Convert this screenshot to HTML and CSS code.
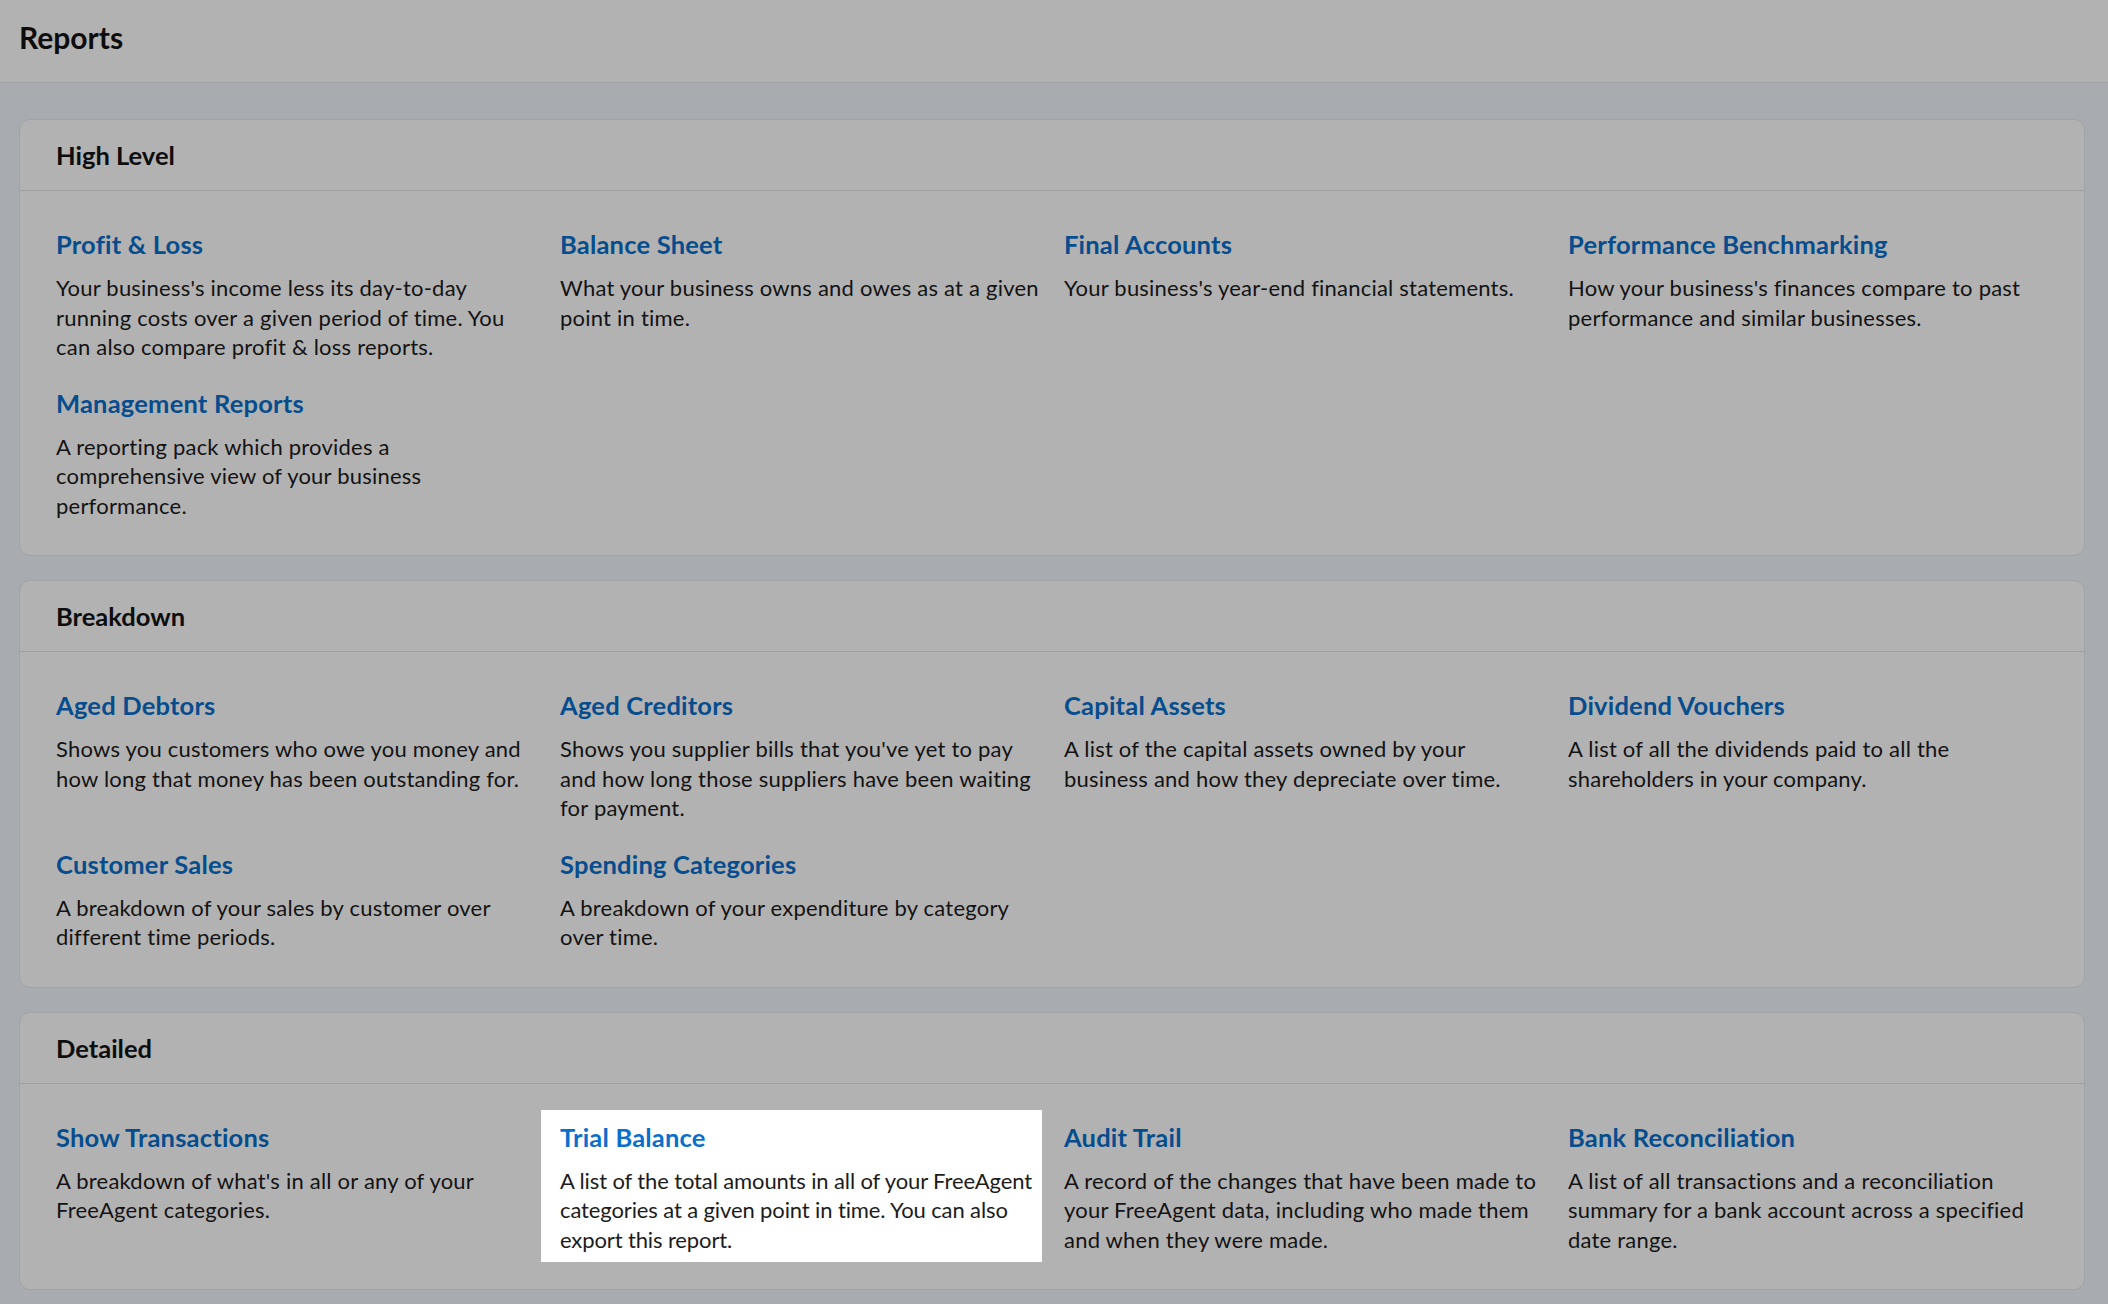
FILE: index.html
```html
<!DOCTYPE html>
<html lang="en">
<head>
<meta charset="utf-8">
<title>Reports</title>
<link rel="stylesheet" href="styles.css">
</head>
<body>
<header class="page-header">
  <h1 class="page-title">Reports</h1>
</header>
<main class="content">
  <section class="card">
    <h2 class="card-title">High Level</h2>
    <div class="grid">
      <div class="item"><a class="item-title" href="#">Profit &amp; Loss</a><p class="item-desc">Your business's income less its day-to-day running costs over a given period of time. You can also compare profit &amp; loss reports.</p></div>
      <div class="item"><a class="item-title" href="#">Balance Sheet</a><p class="item-desc">What your business owns and owes as at a given point in time.</p></div>
      <div class="item"><a class="item-title" href="#">Final Accounts</a><p class="item-desc">Your business's year-end financial statements.</p></div>
      <div class="item"><a class="item-title" href="#">Performance Benchmarking</a><p class="item-desc">How your business's finances compare to past performance and similar businesses.</p></div>
      <div class="item"><a class="item-title" href="#">Management Reports</a><p class="item-desc narrow">A reporting pack which provides a comprehensive view of your business performance.</p></div>
    </div>
  </section>
  <section class="card">
    <h2 class="card-title">Breakdown</h2>
    <div class="grid">
      <div class="item"><a class="item-title" href="#">Aged Debtors</a><p class="item-desc">Shows you customers who owe you money and how long that money has been outstanding for.</p></div>
      <div class="item"><a class="item-title" href="#">Aged Creditors</a><p class="item-desc">Shows you supplier bills that you've yet to pay and how long those suppliers have been waiting for payment.</p></div>
      <div class="item"><a class="item-title" href="#">Capital Assets</a><p class="item-desc">A list of the capital assets owned by your business and how they depreciate over time.</p></div>
      <div class="item"><a class="item-title" href="#">Dividend Vouchers</a><p class="item-desc">A list of all the dividends paid to all the shareholders in your company.</p></div>
      <div class="item"><a class="item-title" href="#">Customer Sales</a><p class="item-desc">A breakdown of your sales by customer over different time periods.</p></div>
      <div class="item"><a class="item-title" href="#">Spending Categories</a><p class="item-desc">A breakdown of your expenditure by category over time.</p></div>
    </div>
  </section>
  <section class="card">
    <h2 class="card-title">Detailed</h2>
    <div class="grid">
      <div class="item"><a class="item-title" href="#">Show Transactions</a><p class="item-desc">A breakdown of what's in all or any of your FreeAgent categories.</p></div>
      <div class="item spotlight"><a class="item-title" href="#">Trial Balance</a><p class="item-desc">A list of the total amounts in all of your FreeAgent categories at a given point in time. You can also export this report.</p></div>
      <div class="item"><a class="item-title" href="#">Audit Trail</a><p class="item-desc">A record of the changes that have been made to your FreeAgent data, including who made them and when they were made.</p></div>
      <div class="item"><a class="item-title" href="#">Bank Reconciliation</a><p class="item-desc">A list of all transactions and a reconciliation summary for a bank account across a specified date range.</p></div>
    </div>
  </section>
</main>
</body>
</html>
```

FILE: styles.css
```css
* { box-sizing: border-box; }
html, body { margin: 0; padding: 0; }
body {
  background: #f1f5fc;
  font-family: Lato, "Noto Sans", "Liberation Sans", sans-serif;
  color: #1f1f1f;
  overflow: hidden;
  height: 1304px;
}
.page-header {
  background: #ffffff;
  height: 83px;
  border-bottom: 1px solid #e4e7ec;
  display: flex;
  align-items: center;
  padding: 0 19px;
}
.page-title {
  margin: 0;
  font-size: 30px;
  font-weight: 700;
  color: #141414;
  padding-bottom: 8px;
}
.content {
  padding: 36px 23px 0 19px;
  display: flex;
  flex-direction: column;
  gap: 24px;
}
.card {
  background: #ffffff;
  border: 1px solid #e6e8eb;
  border-radius: 11px;
}
.card-title {
  margin: 0;
  height: 71px;
  display: flex;
  align-items: center;
  padding: 0 36px 0;
  font-size: 25.5px;
  font-weight: 700;
  color: #141414;
  border-bottom: 1px solid #e4e6e9;
}
.grid {
  display: grid;
  grid-template-columns: repeat(4, 482px);
  column-gap: 22px;
  row-gap: 25px;
  padding: 37px 36px 35px;
}
.item {
  display: flex;
  flex-direction: column;
  gap: 13px;
}
.item-title {
  font-size: 25.5px;
  line-height: 32px;
  font-weight: 700;
  color: #0a6fcc;
  text-decoration: none;
  letter-spacing: 0.2px;
}
.item-desc {
  margin: 0;
  font-size: 22px;
  line-height: 29.5px;
  letter-spacing: 0.22px;
  color: #1c1c1c;
}
.item-desc.narrow { max-width: 400px; }
.spotlight {
  position: relative;
  z-index: 10;
  background: #ffffff;
  padding: 11px 0 8px 19px;
  margin: -11px 0 -8px -19px;
  box-shadow: 0 0 0 4000px rgba(0, 0, 0, 0.3);
}
.spotlight .item-desc { letter-spacing: -0.12px; }
```
